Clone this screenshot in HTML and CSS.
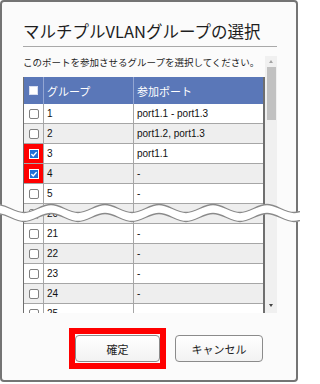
FILE: index.html
```html
<!DOCTYPE html>
<html lang="ja">
<head>
<meta charset="utf-8">
<title>マルチプルVLANグループの選択</title>
<link rel="stylesheet" href="styles.css">
</head>
<body>
<div class="dialog">
  <h1 class="title">マルチプルVLANグループの選択</h1>
  <hr class="rule">
  <div class="scroll-area">
    <div class="scroll-content">
      <p class="lead">このポートを参加させるグループを選択してください。</p>
      <div class="grid">
        <div class="row head">
          <div class="cell chk"><span class="box-head"></span></div>
          <div class="cell">グループ</div>
          <div class="cell">参加ポート</div>
        </div>
        <div class="row">
          <div class="cell chk"><span class="box"></span></div>
          <div class="cell">1</div>
          <div class="cell">port1.1 - port1.3</div>
        </div>
        <div class="row alt">
          <div class="cell chk"><span class="box"></span></div>
          <div class="cell">2</div>
          <div class="cell">port1.2, port1.3</div>
        </div>
        <div class="row">
          <div class="cell chk mark"><svg class="checked" width="10" height="10" viewBox="0 0 10 10"><rect x="0" y="0" width="10" height="10" fill="#fff"/><rect x="1" y="1" width="8" height="8" fill="#1f6ed8"/><path d="M2.4 5.1 L4.2 6.9 L7.6 3.1" fill="none" stroke="#fff" stroke-width="1.4"/></svg></div>
          <div class="cell">3</div>
          <div class="cell">port1.1</div>
        </div>
        <div class="row alt">
          <div class="cell chk mark"><svg class="checked" width="10" height="10" viewBox="0 0 10 10"><rect x="0" y="0" width="10" height="10" fill="#fff"/><rect x="1" y="1" width="8" height="8" fill="#1f6ed8"/><path d="M2.4 5.1 L4.2 6.9 L7.6 3.1" fill="none" stroke="#fff" stroke-width="1.4"/></svg></div>
          <div class="cell">4</div>
          <div class="cell">-</div>
        </div>
        <div class="row">
          <div class="cell chk"><span class="box"></span></div>
          <div class="cell">5</div>
          <div class="cell">-</div>
        </div>
        <div class="row alt">
          <div class="cell chk"><span class="box"></span></div>
          <div class="cell">20</div>
          <div class="cell">-</div>
        </div>
        <div class="row">
          <div class="cell chk"><span class="box"></span></div>
          <div class="cell">21</div>
          <div class="cell">-</div>
        </div>
        <div class="row alt">
          <div class="cell chk"><span class="box"></span></div>
          <div class="cell">22</div>
          <div class="cell">-</div>
        </div>
        <div class="row">
          <div class="cell chk"><span class="box"></span></div>
          <div class="cell">23</div>
          <div class="cell">-</div>
        </div>
        <div class="row alt">
          <div class="cell chk"><span class="box"></span></div>
          <div class="cell">24</div>
          <div class="cell">-</div>
        </div>
        <div class="row">
          <div class="cell chk"><span class="box"></span></div>
          <div class="cell">25</div>
          <div class="cell">-</div>
        </div>
      </div>
    </div>
    <div class="scrollbar">
      <div class="arrow up"></div>
      <div class="thumb"></div>
      <div class="track"></div>
      <div class="arrow down"></div>
    </div>
  </div>
  <div class="actions">
    <div class="highlight"><button class="btn">確定</button></div>
    <button class="btn cancel">キャンセル</button>
  </div>
</div>
<svg class="wave" width="300" height="28" viewBox="0 0 300 28">
  <defs>
    <path id="wv" d="M-57 -4C-47 -4 -40 4 -30 4C-20 4 -13 -4 -3 -4C7 -4 14 4 24 4C34 4 41 -4 51 -4C61 -4 68 4 78 4C88 4 95 -4 105 -4C115 -4 122 4 132 4C142 4 149 -4 159 -4C169 -4 176 4 186 4C196 4 203 -4 213 -4C223 -4 230 4 240 4C250 4 257 -4 267 -4C277 -4 284 4 294 4C304 4 311 -4 321 -4"/>
  </defs>
  <g fill="none">
    <use href="#wv" transform="translate(0,15)" stroke="#fff" stroke-width="9.5"/>
    <use href="#wv" transform="translate(0,10.5)" stroke="#8a8a8a" stroke-width="1.3"/>
    <use href="#wv" transform="translate(0,19.5)" stroke="#8a8a8a" stroke-width="1.3"/>
  </g>
</svg>
</body>
</html>
```

FILE: styles.css
```css
* {
  box-sizing: border-box;
  margin: 0;
  padding: 0;
}

html,
body {
  background: #fff;
}

body {
  width: 300px;
  height: 384px;
  overflow: hidden;
  font-family: "Noto Sans CJK JP", sans-serif;
  color: #222;
}

.dialog {
  width: 298px;
  height: 382px;
  border: 2px solid #747474;
  border-radius: 4px;
  background: #fbfbfb;
  padding: 19px 19px 0 21px;
  display: flex;
  flex-direction: column;
}

.title {
  font-size: 16.5px;
  font-weight: normal;
  line-height: 20px;
  color: #1e1e1e;
  white-space: nowrap;
}

.rule {
  border: 0;
  border-top: 1px solid #a9a9a9;
  margin-top: 5px;
  height: 0;
}

.scroll-area {
  margin-top: 9px;
  height: 257px;
  display: flex;
}

.scroll-content {
  width: 242px;
  overflow: hidden;
}

.lead {
  font-size: 9.5px;
  line-height: 12px;
  height: 21px;
  white-space: nowrap;
  color: #1e1e1e;
}

.grid {
  border-left: 1px solid #6f6f6f;
  border-right: 2px solid #6f6f6f;
  background: #fff;
}

.row {
  display: grid;
  grid-template-columns: 20px 90px 1fr;
  height: 20px;
  border-bottom: 1px solid #a6a6a6;
}

.row.alt {
  background: #eeeeee;
}

.row.head {
  height: 27px;
  border-bottom: 0;
  background: #5a77b8;
}

.cell {
  border-right: 1px solid #a6a6a6;
  padding-left: 3px;
  display: flex;
  align-items: center;
  font-family: "Liberation Sans", sans-serif;
  font-size: 10px;
  color: #111;
  white-space: nowrap;
}

.cell:last-child {
  border-right: 0;
}

.head .cell {
  border-right-color: #93a6d3;
  font-family: "Noto Sans CJK JP", sans-serif;
  font-size: 11px;
  color: #fff;
}

.head .cell:last-child {
  border-right: 0;
}

.cell.chk {
  padding: 0;
  justify-content: center;
}

.cell.mark {
  background: #ff0000;
}

.box {
  width: 10px;
  height: 10px;
  border: 1px solid #808080;
  border-radius: 2px;
  background: #fff;
}

.box-head {
  width: 9px;
  height: 9px;
  border: 1px solid #d8def0;
  background: #fff;
}

.checked {
  display: block;
}

.scrollbar {
  width: 12px;
  background: #f0f0f0;
  display: flex;
  flex-direction: column;
  align-items: center;
}

.arrow {
  width: 100%;
  height: 10px;
  display: flex;
  align-items: center;
  justify-content: center;
}

.arrow::before {
  content: "";
  border-left: 2.5px solid transparent;
  border-right: 2.5px solid transparent;
  border-bottom: 3px solid #a3a3a3;
}

.arrow.down {
  margin-bottom: 3px;
}

.arrow.down::before {
  border-bottom: 0;
  border-top: 3px solid #444;
}

.thumb {
  width: 9px;
  height: 53px;
  margin-top: 1px;
  background: #c1c1c1;
}

.track {
  flex: 1;
}

.actions {
  margin-top: 15px;
  padding-left: 46px;
  display: flex;
  align-items: center;
}

.highlight {
  border: 6px solid #ff0000;
  padding: 1px 0;
}

.btn {
  display: block;
  width: 85px;
  height: 27px;
  padding: 0;
  border: 1px solid #8b8b8b;
  border-radius: 4px;
  background: linear-gradient(#ffffff, #f2f2f2);
  font-family: "Noto Sans CJK JP", sans-serif;
  font-size: 11px;
  color: #222;
}

.btn.cancel {
  width: 88px;
  margin-left: 9px;
}

.wave {
  position: absolute;
  left: 0;
  top: 198px;
  display: block;
}
```
